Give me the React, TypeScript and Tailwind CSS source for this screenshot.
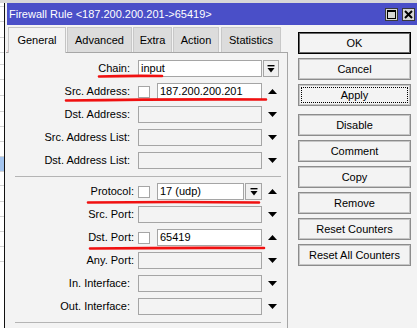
import React from "react";

type Row = {
  label: string;
  kind: "drop" | "check" | "plain" | "proto";
  value?: string;
  arrow?: "up" | "down";
  tight?: boolean;
};

const top: Row[] = [
  { label: "Chain:", kind: "drop", value: "input" },
  { label: "Src. Address:", kind: "check", value: "187.200.200.201", arrow: "up" },
  { label: "Dst. Address:", kind: "plain", arrow: "down" },
  { label: "Src. Address List:", kind: "plain", arrow: "down" },
  { label: "Dst. Address List:", kind: "plain", arrow: "down" },
];

const bottom: Row[] = [
  { label: "Protocol:", kind: "proto", value: "17 (udp)", arrow: "up", tight: true },
  { label: "Src. Port:", kind: "plain", arrow: "down", tight: true },
  { label: "Dst. Port:", kind: "check", value: "65419", arrow: "up", tight: true },
  { label: "Any. Port:", kind: "plain", arrow: "down", tight: true },
  { label: "In. Interface:", kind: "plain", arrow: "down" },
  { label: "Out. Interface:", kind: "plain", arrow: "down" },
];

const buttons = [
  ["OK", "Cancel", "Apply"],
  ["Disable", "Comment", "Copy", "Remove", "Reset Counters", "Reset All Counters"],
];

function Tri({ up }: { up?: boolean }) {
  return (
    <svg width="9" height="5" viewBox="0 0 9 5" className="block">
      <path d={up ? "M0 5 L4.5 0 L9 5 Z" : "M0 0 L9 0 L4.5 5 Z"} fill="#000" />
    </svg>
  );
}

function DropBtn({ w }: { w: string }) {
  return (
    <div
      className={`${w} flex h-[17px] shrink-0 items-center justify-center border border-[#a5a5a5] bg-[#f0f0f0]`}
    >
      <svg width="8" height="8" viewBox="0 0 8 8">
        <rect x="0.5" y="0" width="7" height="1.4" fill="#000" />
        <path d="M0.5 3 L7.5 3 L4 7.5 Z" fill="#000" />
      </svg>
    </div>
  );
}

function Box({ w, value }: { w: string; value?: string }) {
  return (
    <div
      className={`${w} h-[17px] shrink-0 border border-[#a5a5a5] pl-[2px] leading-[15px] ${
        value ? "bg-white" : "bg-transparent"
      }`}
    >
      {value}
    </div>
  );
}

function Check() {
  return <div className="h-[12px] w-[12px] shrink-0 border border-[#a5a5a5] bg-white" />;
}

function FormRow({ row }: { row: Row }) {
  return (
    <div className="flex h-[17px] items-center">
      <div className={`w-[132px] shrink-0 text-right ${row.tight ? "pr-[4px]" : "pr-[8px]"}`}>
        {row.label}
      </div>
      {row.kind === "drop" && (
        <>
          <Box w="w-[124px]" value={row.value} />
          <div className="ml-[1px]">
            <DropBtn w="w-[16px]" />
          </div>
        </>
      )}
      {row.kind === "plain" && <Box w="w-[124px]" />}
      {row.kind === "check" && (
        <>
          <Check />
          <div className="ml-[7px]">
            <Box w="w-[105px]" value={row.value} />
          </div>
        </>
      )}
      {row.kind === "proto" && (
        <>
          <Check />
          <div className="ml-[7px]">
            <Box w="w-[87px]" value={row.value} />
          </div>
          <div className="ml-[1px]">
            <DropBtn w="w-[17px]" />
          </div>
        </>
      )}
      {row.arrow && (
        <div className="ml-[6px]">
          <Tri up={row.arrow === "up"} />
        </div>
      )}
    </div>
  );
}

function Tab({ label, w, active }: { label: string; w: string; active?: boolean }) {
  return (
    <div
      className={`${w} flex shrink-0 items-center justify-center border border-b-0 ${
        active
          ? "relative z-10 h-[26px] border-[#c4c4c4] bg-[#f3f3f3]"
          : "h-[25px] border-[#c8c8c8] bg-[#dcdcdc]"
      }`}
    >
      {label}
    </div>
  );
}

function WinButton({ label }: { label: string }) {
  const ok = label === "OK";
  const apply = label === "Apply";
  return (
    <div
      className={`flex h-[22px] items-center justify-center bg-[#f3f3f3] ${
        ok
          ? "border border-black shadow-[inset_0_0_0_1px_#666]"
          : "border border-[#8c8c8c] shadow-[inset_0_0_0_1px_#c6c6c6]"
      } ${apply ? "outline-1 outline-dotted outline-black outline-offset-[-4px]" : ""}`}
    >
      {label}
    </div>
  );
}

// sliver of the window behind the dialog
function BackList() {
  const rows = [
    "h-[4px]",
    "h-[15px]",
    "h-[16px]",
    "h-[15px]",
    "h-[12px]",
    "h-[15px]",
    "h-[16px]",
    "h-[16px]",
    "h-[15px]",
    "h-[15px]",
    "h-[15px]",
    "h-[15px] bg-[#a3c4ee]",
    "h-[14px]",
    "h-[16px]",
    "h-[15px]",
    "h-[15px]",
    "h-[15px]",
    "h-[15px]",
  ];
  return (
    <div className="flex w-[4px] shrink-0 flex-col overflow-hidden bg-white">
      {rows.map((c, i) => (
        <div key={i} className={`${c} shrink-0 border-b border-[#d4d4d4]`} />
      ))}
    </div>
  );
}

export default function App() {
  return (
    <div className="relative h-[328px] w-[417px] overflow-hidden bg-[#d8d8d8] font-['Liberation_Sans',Arial,sans-serif] text-[11px] text-black">
      <div className="h-[3px]" />
      <div className="flex h-[325px]">
        <BackList />
        <div className="flex flex-1 flex-col border-l border-[#111] bg-[#f3f3f3]">
          {/* title bar */}
          <div className="ml-[2px] flex h-[22px] shrink-0 items-center bg-[#4a4fc8] pl-[2px] pr-[2px] text-[11px] text-white">
            <span>Firewall Rule &lt;187.200.200.201-&gt;65419&gt;</span>
            <div className="ml-auto flex gap-[4px]">
              <div className="flex h-[13px] w-[13px] items-center justify-center border border-[#3a3a3a] bg-[#d6d6d6]">
                <svg width="9" height="9" viewBox="0 0 9 9">
                  <rect x="0.5" y="0.5" width="8" height="8" fill="none" stroke="#000" />
                  <rect x="0" y="0" width="9" height="2" fill="#000" />
                </svg>
              </div>
              <div className="flex h-[13px] w-[13px] items-center justify-center border border-[#3a3a3a] bg-[#d6d6d6]">
                <svg width="9" height="9" viewBox="0 0 9 9">
                  <path d="M1 1 L8 8 M8 1 L1 8" stroke="#000" strokeWidth="2" />
                </svg>
              </div>
            </div>
          </div>

          <div className="flex">
            {/* left: tabs + form */}
            <div className="flex w-[283px] shrink-0 flex-col">
              <div className="mt-[2px] flex h-[25px] pl-[3px]">
                <Tab label="General" w="w-[58px]" active />
                <div className="ml-[1px]">
                  <Tab label="Advanced" w="w-[65px]" />
                </div>
                <div className="ml-[1px]">
                  <Tab label="Extra" w="w-[39px]" />
                </div>
                <div className="ml-[1px]">
                  <Tab label="Action" w="w-[46px]" />
                </div>
                <div className="ml-[2px]">
                  <Tab label="Statistics" w="w-[60px]" />
                </div>
              </div>
              <div className="ml-[1px] flex h-[300px] flex-col border-r border-t border-[#a6a6a6] pt-[7px]">
                <div className="flex flex-col gap-[6px]">
                  {top.map((r) => (
                    <FormRow key={r.label} row={r} />
                  ))}
                </div>
                <div className="mb-[6px] ml-[9px] mr-[6px] mt-[7px] h-px bg-[#b4b4b4]" />
                <div className="flex flex-col gap-[6px]">
                  {bottom.map((r) => (
                    <FormRow key={r.label} row={r} />
                  ))}
                </div>
                <div className="ml-[9px] mr-[6px] mt-[7px] h-px bg-[#b4b4b4]" />
              </div>
            </div>

            {/* right: buttons */}
            <div className="ml-[10px] mt-[7px] flex w-[113px] shrink-0 flex-col">
              <div className="flex flex-col gap-[4px]">
                {buttons[0].map((b) => (
                  <WinButton key={b} label={b} />
                ))}
              </div>
              <div className="mt-[8px] flex flex-col gap-[4px]">
                {buttons[1].map((b) => (
                  <WinButton key={b} label={b} />
                ))}
              </div>
            </div>
          </div>
        </div>
      </div>

      {/* red annotation strokes */}
      <svg
        className="pointer-events-none absolute left-0 top-0"
        width="417"
        height="328"
        viewBox="0 0 417 328"
      >
        <g stroke="#f01010" strokeWidth="2.6" strokeLinecap="round" fill="none">
          <path d="M9 51 Q36 50 63 50" />
          <path d="M99 76.5 Q130 75.5 162 76" />
          <path d="M66 100.5 Q170 99 266 99.5" />
          <path d="M88 202.5 Q175 201.5 259 202.5" />
          <path d="M90 248.5 Q180 247.5 264 248" />
        </g>
      </svg>
    </div>
  );
}
